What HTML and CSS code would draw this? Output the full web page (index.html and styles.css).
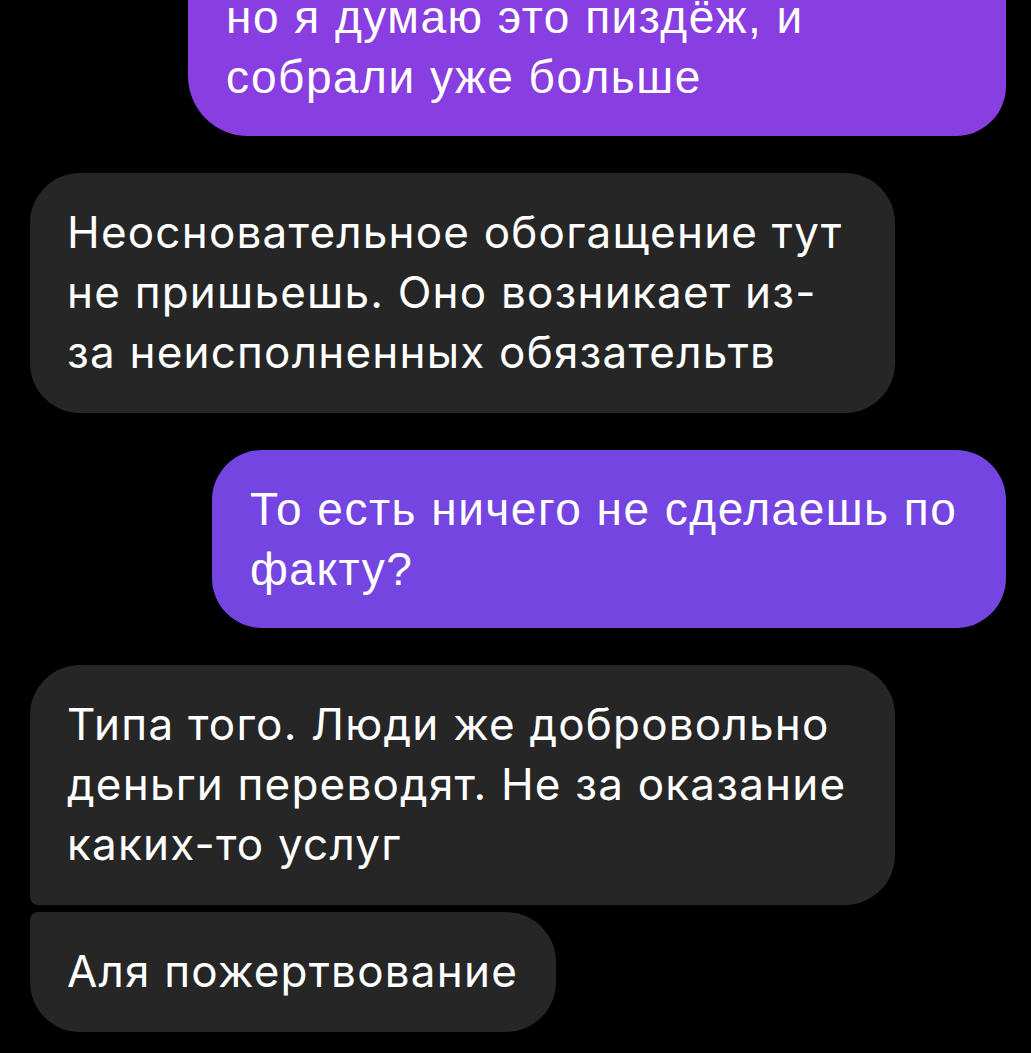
FILE: index.html
```html
<!DOCTYPE html>
<html lang="ru">
<head>
    <meta charset="UTF-8">
    <meta name="viewport" content="width=device-width, initial-scale=1.0">
    <title>Чат</title>
    <link rel="stylesheet" href="styles.css">
</head>
<body>
    <div class="chat">
        <div class="msg msg-out msg-first">
            <div class="bubble bubble-out bubble-top">
                но я думаю это пиздёж, и<br>собрали уже больше
            </div>
        </div>

        <div class="msg msg-in">
            <div class="bubble bubble-in">
                Неосновательное обогащение тут не пришьешь. Оно возникает из-за неисполненных обязательтв
            </div>
        </div>

        <div class="msg msg-out">
            <div class="bubble bubble-out bubble-mid">
                То есть ничего не сделаешь по<br>факту?
            </div>
        </div>

        <div class="msg msg-in msg-group">
            <div class="bubble bubble-in bubble-group-start">
                Типа того. Люди же добровольно деньги переводят. Не за оказание каких-то услуг
            </div>
            <div class="bubble bubble-in bubble-group-end">
                Аля пожертвование
            </div>
        </div>
    </div>
</body>
</html>
```

FILE: styles.css
```css
body {
    margin: 0;
    background: #000;
    color: #fff;
    height: 100vh;
    overflow: hidden;
}

.chat {
    display: flex;
    flex-direction: column;
    gap: 37px;
    padding: 0 25px 0 30px;
}

.msg {
    display: flex;
}

.msg-out {
    justify-content: flex-end;
}

.msg-in {
    justify-content: flex-start;
}

.msg-group {
    flex-direction: column;
    align-items: flex-start;
    gap: 7px;
}

/* первое сообщение обрезано сверху */
.msg-first {
    margin-top: -83px;
}

.bubble {
    border-radius: 50px;
    line-height: 60px;
    box-sizing: border-box;
}

/* входящие */
.bubble-in {
    background: #262626;
    font-family: Inter, "Noto Sans", sans-serif;
    font-size: 44px;
    letter-spacing: 1.2px;
    max-width: 865px;
    padding: 29px 38px 31px 37px;
}

.bubble-group-start {
    border-bottom-left-radius: 8px;
}

.bubble-group-end {
    border-top-left-radius: 8px;
}

/* исходящие */
.bubble-out {
    font-family: "Liberation Sans", Arial, sans-serif;
    font-size: 46px;
    letter-spacing: 1.5px;
    padding: 29px 40px 29px 38px;
}

.bubble-top {
    background: #883ee0;
    width: 818px;
    padding-top: 70px;
    border-radius: 50px 50px 50px 60px;
}

.bubble-mid {
    background: #7545e1;
    width: 794px;
}
```
